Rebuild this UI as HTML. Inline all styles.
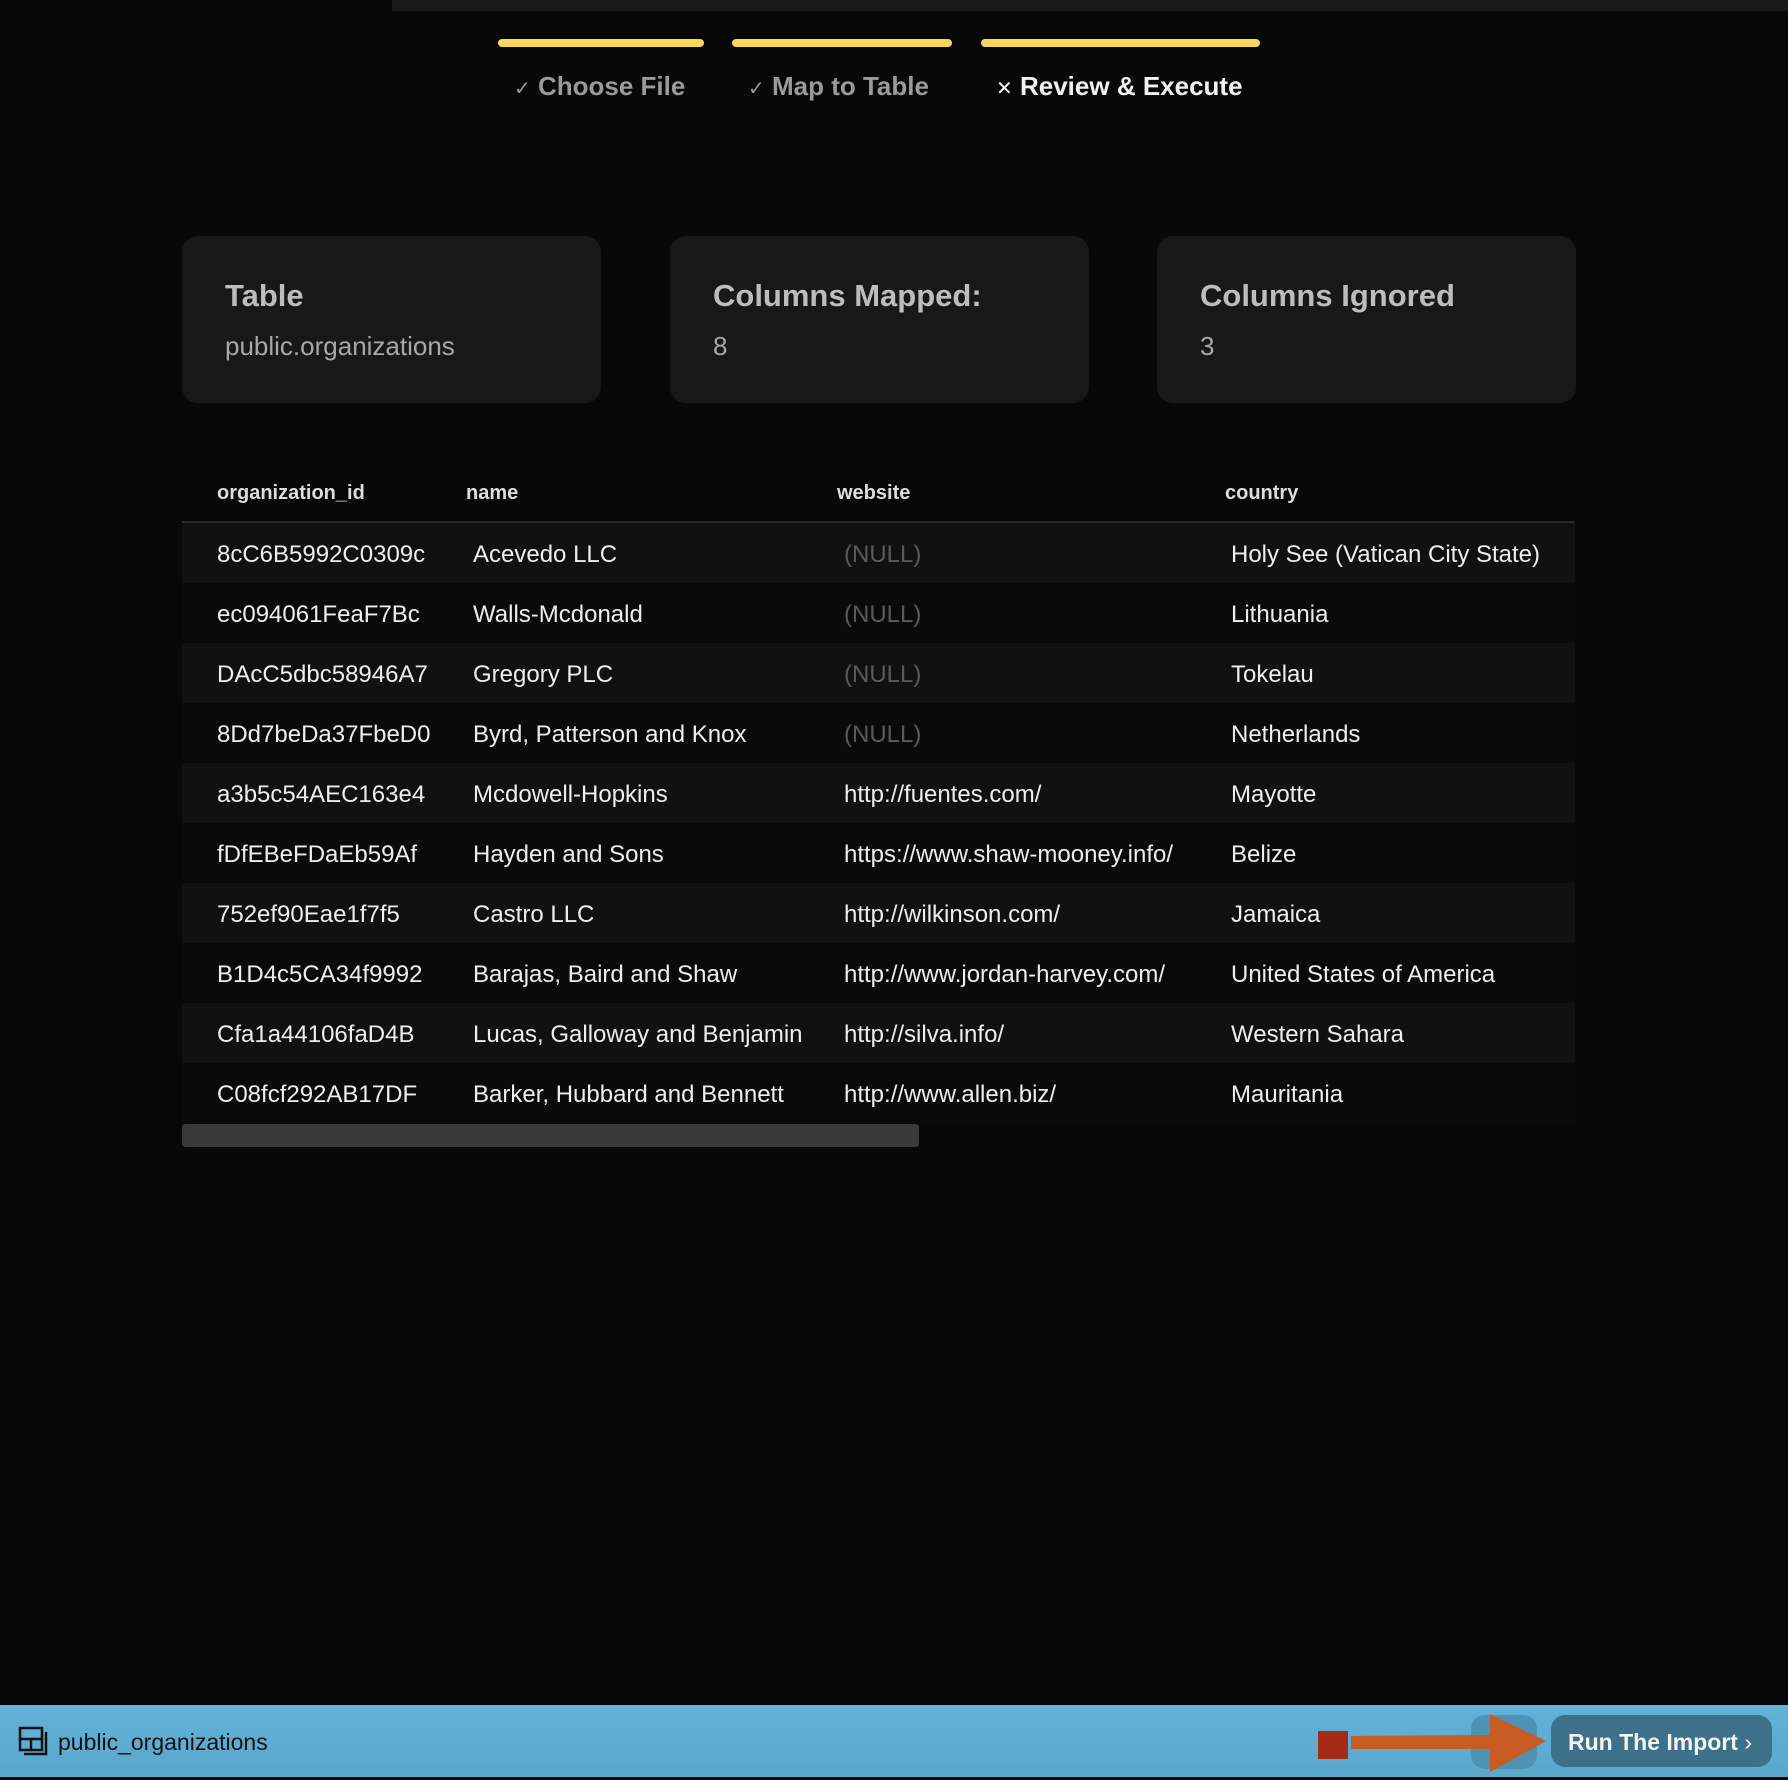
<!DOCTYPE html>
<html><head><meta charset="utf-8"><style>
*{margin:0;padding:0;box-sizing:border-box}
body{width:1788px;height:1780px;background:#080808;font-family:"Liberation Sans",sans-serif;position:relative;overflow:hidden;color:#eee}
.a{position:absolute}
.bar{position:absolute;top:39px;height:8px;background:#f7d65a;border-radius:4px}
.step{position:absolute;top:71px;font-size:26px;font-weight:bold;color:#9a9a9a;white-space:nowrap}
.card{position:absolute;top:236px;width:419px;height:167px;background:#181818;border-radius:16px;padding:42px 0 0 43px}
.card h2{font-size:31px;color:#bdbdbd;font-weight:bold;margin-bottom:17px}
.card p{font-size:26px;color:#a8a8a8}
.th{position:absolute;top:482px;font-size:20px;font-weight:bold;color:#ddd}
.row{position:absolute;left:182px;width:1393px;height:60px;font-size:24px;color:#eee}
.row span{position:absolute;top:18px;white-space:nowrap}
.n{color:#5a5a5a}
</style></head><body>
<div class="a" style="left:392px;top:0;width:1396px;height:11px;background:#181818"></div>
<div class="bar" style="left:498px;width:206px"></div>
<div class="bar" style="left:732px;width:220px"></div>
<div class="bar" style="left:981px;width:279px"></div>
<div class="step" style="left:514px"><span style="font-size:20px;font-weight:normal">✓</span> Choose File</div>
<div class="step" style="left:748px"><span style="font-size:20px;font-weight:normal">✓</span> Map to Table</div>
<div class="step" style="left:996px;color:#f2f2f2"><span style="font-size:20px;font-weight:normal">✕</span> Review &amp; Execute</div>

<div class="card" style="left:182px"><h2>Table</h2><p>public.organizations</p></div>
<div class="card" style="left:670px"><h2>Columns Mapped:</h2><p>8</p></div>
<div class="card" style="left:1157px"><h2>Columns Ignored</h2><p>3</p></div>

<div class="th" style="left:217px">organization_id</div>
<div class="th" style="left:466px">name</div>
<div class="th" style="left:837px">website</div>
<div class="th" style="left:1225px">country</div>
<div class="a" style="left:182px;top:521px;width:1393px;height:2px;background:#2a2a2a"></div>

<div class="row" style="top:523px;background:#111"><span style="left:35px">8cC6B5992C0309c</span><span style="left:291px">Acevedo LLC</span><span class="n" style="left:662px">(NULL)</span><span style="left:1049px">Holy See (Vatican City State)</span></div>
<div class="row" style="top:583px;background:#0a0a0a"><span style="left:35px">ec094061FeaF7Bc</span><span style="left:291px">Walls-Mcdonald</span><span class="n" style="left:662px">(NULL)</span><span style="left:1049px">Lithuania</span></div>
<div class="row" style="top:643px;background:#111"><span style="left:35px">DAcC5dbc58946A7</span><span style="left:291px">Gregory PLC</span><span class="n" style="left:662px">(NULL)</span><span style="left:1049px">Tokelau</span></div>
<div class="row" style="top:703px;background:#0a0a0a"><span style="left:35px">8Dd7beDa37FbeD0</span><span style="left:291px">Byrd, Patterson and Knox</span><span class="n" style="left:662px">(NULL)</span><span style="left:1049px">Netherlands</span></div>
<div class="row" style="top:763px;background:#111"><span style="left:35px">a3b5c54AEC163e4</span><span style="left:291px">Mcdowell-Hopkins</span><span style="left:662px">http://fuentes.com/</span><span style="left:1049px">Mayotte</span></div>
<div class="row" style="top:823px;background:#0a0a0a"><span style="left:35px">fDfEBeFDaEb59Af</span><span style="left:291px">Hayden and Sons</span><span style="left:662px">https://www.shaw-mooney.info/</span><span style="left:1049px">Belize</span></div>
<div class="row" style="top:883px;background:#111"><span style="left:35px">752ef90Eae1f7f5</span><span style="left:291px">Castro LLC</span><span style="left:662px">http://wilkinson.com/</span><span style="left:1049px">Jamaica</span></div>
<div class="row" style="top:943px;background:#0a0a0a"><span style="left:35px">B1D4c5CA34f9992</span><span style="left:291px">Barajas, Baird and Shaw</span><span style="left:662px">http://www.jordan-harvey.com/</span><span style="left:1049px">United States of America</span></div>
<div class="row" style="top:1003px;background:#111"><span style="left:35px">Cfa1a44106faD4B</span><span style="left:291px">Lucas, Galloway and Benjamin</span><span style="left:662px">http://silva.info/</span><span style="left:1049px">Western Sahara</span></div>
<div class="row" style="top:1063px;background:#0a0a0a"><span style="left:35px">C08fcf292AB17DF</span><span style="left:291px">Barker, Hubbard and Bennett</span><span style="left:662px">http://www.allen.biz/</span><span style="left:1049px">Mauritania</span></div>
<div class="a" style="left:182px;top:1124px;width:737px;height:23px;background:#3a3a3a;border-radius:3px"></div>

<div class="a" style="left:0;top:1705px;width:1788px;height:72px;background:linear-gradient(180deg,#62b2d8,#5aa7cc)"></div>
<svg class="a" style="left:18px;top:1726px" width="32" height="32" viewBox="0 0 32 32" fill="none" stroke="#111" stroke-width="2.5"><rect x="2" y="2" width="22" height="22"/><line x1="2" y1="13" x2="24" y2="13"/><line x1="13" y1="13" x2="13" y2="24"/><path d="M28 6v22H6"/></svg>
<div class="a" style="left:58px;top:1729px;font-size:23px;color:#111">public_organizations</div>
<div class="a" style="left:1318px;top:1731px;width:30px;height:28px;background:#a52a18"></div>
<div class="a" style="left:1471px;top:1715px;width:66px;height:54px;background:#4f93b4;border-radius:14px"></div>
<svg class="a" style="left:1350px;top:1714px" width="200" height="60"><polygon points="1,22 140,21 140,0 196,27 140,58 140,35 1,35" fill="#c85a24"/></svg>
<div class="a" style="left:1551px;top:1715px;width:221px;height:52px;background:#3d7089;border-radius:14px;color:#f4f4f4;font-weight:bold;font-size:23px;line-height:54px;padding-left:17px">Run The Import <span style="font-weight:normal">›</span></div>
</body></html>
